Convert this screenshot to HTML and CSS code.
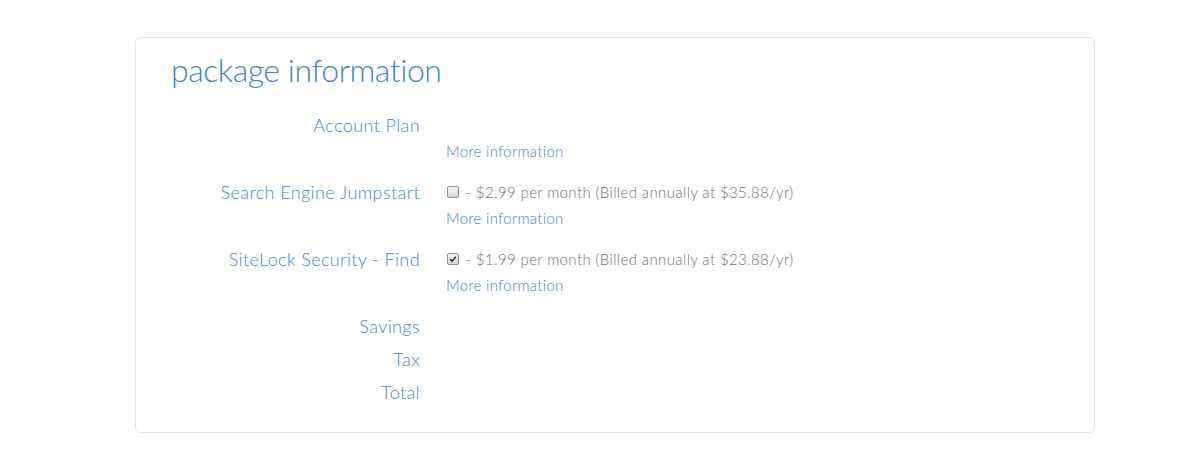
FILE: index.html
```html
<!DOCTYPE html>
<html>
<head>
<meta charset="utf-8">
<link rel="stylesheet" href="styles.css">
</head>
<body>
<div class="card">
  <h2 class="title">package information</h2>
  <div class="rows">
    <div class="row">
      <div class="label">Account Plan</div>
      <div class="value">
        <div class="line"></div>
        <a class="more" href="#">More information</a>
      </div>
    </div>
    <div class="row">
      <div class="label">Search Engine Jumpstart</div>
      <div class="value">
        <div class="line"><span class="cb"></span> - $2.99 per month (Billed annually at $35.88/yr)</div>
        <a class="more" href="#">More information</a>
      </div>
    </div>
    <div class="row">
      <div class="label">SiteLock Security - Find</div>
      <div class="value">
        <div class="line"><span class="cb checked"><svg viewBox="0 0 12 12" width="12" height="12"><path d="M2.6 6.2 L4.9 8.6 L9.4 3.2" fill="none" stroke="#222" stroke-width="1.8"/></svg></span> - $1.99 per month (Billed annually at $23.88/yr)</div>
        <a class="more" href="#">More information</a>
      </div>
    </div>
    <div class="row single first-single">
      <div class="label">Savings</div>
      <div class="value"></div>
    </div>
    <div class="row single">
      <div class="label">Tax</div>
      <div class="value"></div>
    </div>
    <div class="row single last-single">
      <div class="label">Total</div>
      <div class="value"></div>
    </div>
  </div>
</div>
</body>
</html>
```
FILE: styles.css
```css
html, body {
  margin: 0;
  padding: 0;
  background: #fff;
}
body {
  font-family: Lato, "Open Sans", sans-serif;
  font-weight: 300;
}
.card {
  box-sizing: border-box;
  width: 960px;
  height: 396px;
  margin: 37px 0 0 135px;
  border: 1px solid #dae7f5;
  border-radius: 6px;
  padding: 12px 0 0 35px;
}
.title {
  margin: 0;
  font-weight: 300;
  font-size: 32px;
  line-height: 40px;
  color: #3f80d8;
  letter-spacing: -0.45px;
}
.rows {
  margin-top: 22px;
}
.row {
  display: grid;
  grid-template-columns: 249px 1fr;
  column-gap: 26px;
  margin-bottom: 15px;
}
.row.single {
  margin-bottom: 7px;
}
.row.first-single {
  margin-top: 4px;
}
.row.last-single {
  margin-top: 2px;
}
.label {
  text-align: right;
  font-size: 18px;
  line-height: 26px;
  color: #4583d6;
  letter-spacing: 0.4px;
}
.value {
  font-size: 15px;
  line-height: 26px;
  color: #707070;
}
.line {
  height: 26px;
  display: flex;
  align-items: center;
  white-space: pre;
  letter-spacing: 0.38px;
}
.more {
  display: block;
  color: #3f80d8;
  text-decoration: none;
  line-height: 26px;
  font-size: 15px;
  letter-spacing: 0.3px;
}
.cb {
  box-sizing: border-box;
  width: 12px;
  height: 12px;
  border: 1px solid #8d8d8d;
  border-radius: 2px;
  background: linear-gradient(#f4f4f4, #d9d9d9);
  display: inline-flex;
  align-items: center;
  justify-content: center;
  margin: 0 2px 0 1px;
}
.cb svg {
  width: 10px;
  height: 10px;
}
```
